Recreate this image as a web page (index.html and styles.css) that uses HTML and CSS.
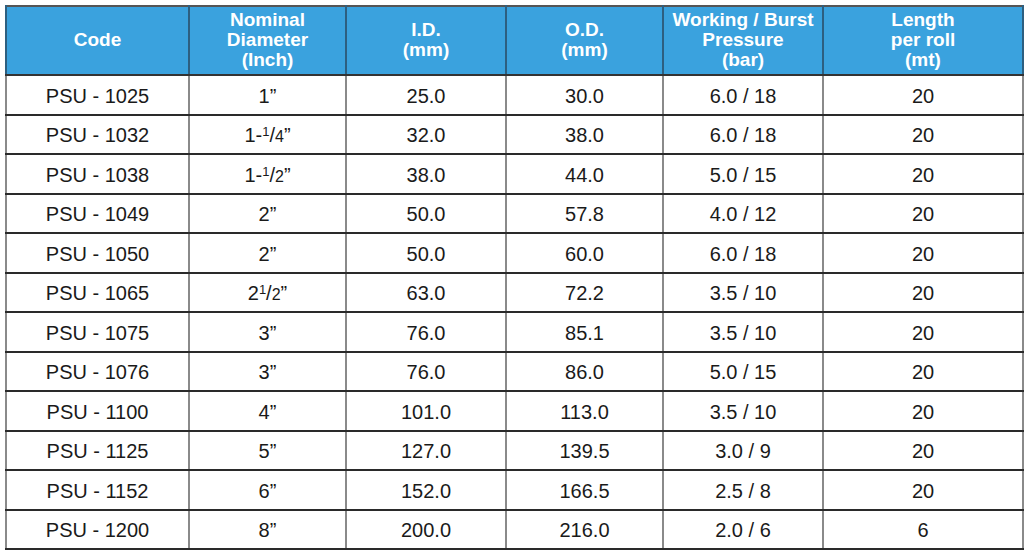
FILE: index.html
```html
<!DOCTYPE html>
<html>
<head>
<meta charset="utf-8">
<link rel="stylesheet" href="styles.css">
</head>
<body>
<table class="spec">
<colgroup>
<col class="c-code"><col class="c-nom"><col class="c-id"><col class="c-od"><col class="c-wp"><col class="c-len">
</colgroup>
<thead>
<tr>
<th>Code</th>
<th>Nominal<br>Diameter<br>(Inch)</th>
<th>I.D.<br>(mm)</th>
<th>O.D.<br>(mm)</th>
<th>Working / Burst<br>Pressure<br>(bar)</th>
<th>Length<br>per roll<br>(mt)</th>
</tr>
</thead>
<tbody>
<tr><td>PSU - 1025</td><td>1”</td><td>25.0</td><td>30.0</td><td>6.0 / 18</td><td>20</td></tr>
<tr><td>PSU - 1032</td><td>1-<span class="num">1</span>/<span class="den">4</span>”</td><td>32.0</td><td>38.0</td><td>6.0 / 18</td><td>20</td></tr>
<tr><td>PSU - 1038</td><td>1-<span class="num">1</span>/<span class="den">2</span>”</td><td>38.0</td><td>44.0</td><td>5.0 / 15</td><td>20</td></tr>
<tr><td>PSU - 1049</td><td>2”</td><td>50.0</td><td>57.8</td><td>4.0 / 12</td><td>20</td></tr>
<tr><td>PSU - 1050</td><td>2”</td><td>50.0</td><td>60.0</td><td>6.0 / 18</td><td>20</td></tr>
<tr><td>PSU - 1065</td><td>2<span class="num">1</span>/<span class="den">2</span>”</td><td>63.0</td><td>72.2</td><td>3.5 / 10</td><td>20</td></tr>
<tr><td>PSU - 1075</td><td>3”</td><td>76.0</td><td>85.1</td><td>3.5 / 10</td><td>20</td></tr>
<tr><td>PSU - 1076</td><td>3”</td><td>76.0</td><td>86.0</td><td>5.0 / 15</td><td>20</td></tr>
<tr><td>PSU - 1100</td><td>4”</td><td>101.0</td><td>113.0</td><td>3.5 / 10</td><td>20</td></tr>
<tr><td>PSU - 1125</td><td>5”</td><td>127.0</td><td>139.5</td><td>3.0 / 9</td><td>20</td></tr>
<tr><td>PSU - 1152</td><td>6”</td><td>152.0</td><td>166.5</td><td>2.5 / 8</td><td>20</td></tr>
<tr><td>PSU - 1200</td><td>8”</td><td>200.0</td><td>216.0</td><td>2.0 / 6</td><td>6</td></tr>
</tbody>
</table>
</body>
</html>
```

FILE: styles.css
```css
html, body {
  margin: 0;
  padding: 0;
  background: #ffffff;
}
body {
  padding: 5px 5px 0 5px;
  font-family: "Liberation Sans", Arial, Helvetica, sans-serif;
}
.spec {
  border-collapse: collapse;
  table-layout: fixed;
  width: 1017px;
  border: 2px solid #555;
}
.c-code { width: 183px; }
.c-nom { width: 157px; }
.c-id { width: 160px; }
.c-od { width: 157px; }
.c-wp { width: 160px; }
.c-len { width: 200px; }
.spec th {
  background: #3aa2de;
  color: #ffffff;
  font-weight: bold;
  font-size: 19px;
  line-height: 20px;
  height: 69px;
  padding: 0 0 1px 0;
  text-align: center;
  vertical-align: middle;
  border-left: 2px solid #2d5f80;
  border-right: 2px solid #2d5f80;
  border-bottom: 2px solid #333;
  box-sizing: border-box;
}
.spec td {
  font-size: 20px;
  color: #1a1a1a;
  height: 39.5px;
  padding: 3px 0 0 0;
  text-align: center;
  vertical-align: middle;
  border-left: 2px solid #8a8a8a;
  border-right: 2px solid #8a8a8a;
  border-bottom: 2px solid #2a2a2a;
  box-sizing: border-box;
}
.spec td .num {
  font-size: 13px;
  vertical-align: 6px;
}
.spec td .den {
  font-size: 16px;
}
```
